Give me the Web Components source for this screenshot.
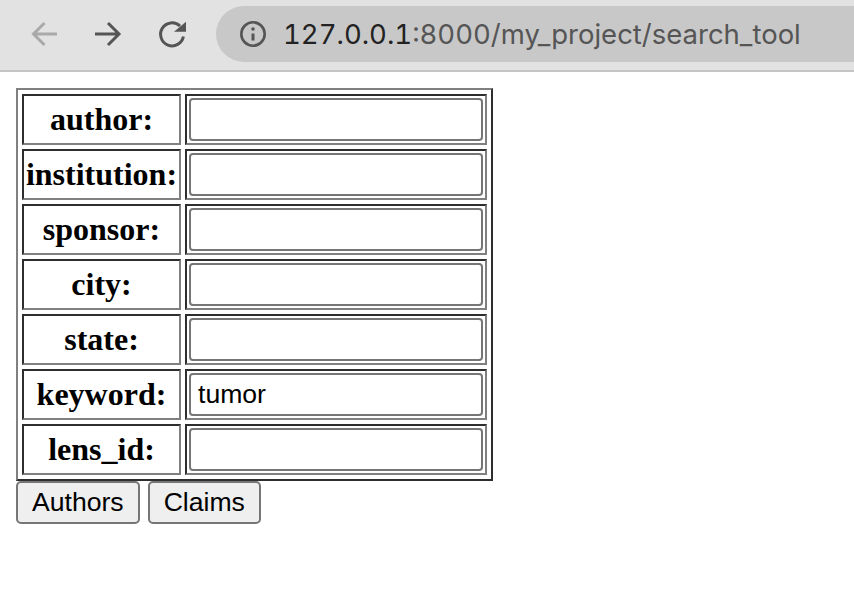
<!doctype html>
<html><head><meta charset="utf-8"><title>search_tool</title>
<style>html,body{margin:0;padding:0;background:#fff;overflow:hidden}</style></head>
<body>
<browser-bar url-host="127.0.0.1" url-rest=":8000/my_project/search_tool"></browser-bar>
<search-form>
  <search-row label="author:"></search-row>
  <search-row label="institution:"></search-row>
  <search-row label="sponsor:"></search-row>
  <search-row label="city:"></search-row>
  <search-row label="state:"></search-row>
  <search-row label="keyword:" value="tumor"></search-row>
  <search-row label="lens_id:"></search-row>
  <form-button slot="actions">Authors</form-button>
  <form-button slot="actions">Claims</form-button>
</search-form>
<script>
class BrowserBar extends HTMLElement{
  connectedCallback(){
    const s=this.attachShadow({mode:'open'});
    s.innerHTML=`<style>
      :host{display:flex;align-items:center;box-sizing:border-box;height:72px;background:#e2e2e2;border-bottom:2px solid #c4c4c4;padding:0 0 2px 28px;overflow:hidden}
      svg{flex:none;display:block}
      .nav{display:flex;gap:32px;align-items:center}
      .omni{flex:1;margin-left:28px;margin-right:-40px;height:56px;background:#c8c8c8;border-radius:28px;display:flex;align-items:center;padding-left:23px;font:27.5px "Inter","Liberation Sans",sans-serif;font-variant-numeric:tabular-nums;color:#555;white-space:nowrap}
      .host{color:#222}
      .text{margin-left:16px;line-height:56px}
    </style>
    <div class="nav">
      <svg width="32" height="32" viewBox="0 0 32 32" fill="none" stroke="#a9a9a9" stroke-width="3"><path d="M29 16H5.5M16.5 5L5.5 16l11 11"/></svg>
      <svg width="32" height="32" viewBox="0 0 32 32" fill="none" stroke="#555" stroke-width="3"><path d="M3 16h24M16 5l11 11-11 11"/></svg>
      <svg width="32" height="32" viewBox="0 0 32 32" fill="none" stroke="#555"><path stroke-width="3" d="M27.4 18.5A11.5 11.5 0 1 1 24 8"/><path fill="#555" stroke="none" d="M30 3.7v10H18z"/></svg>
    </div>
    <div class="omni">
      <svg width="28" height="28" viewBox="0 0 28 28" fill="none" stroke="#555" stroke-width="2.6"><circle cx="14" cy="14" r="11.7"/><path stroke-width="3" d="M14 13.5v7"/><circle cx="14" cy="9" r="1.8" fill="#555" stroke="none"/></svg>
      <span class="text"><span class="host">${this.getAttribute('url-host')}</span>${this.getAttribute('url-rest')}</span>
    </div>`;
  }
}
class SearchForm extends HTMLElement{
  connectedCallback(){
    const s=this.attachShadow({mode:'open'});
    s.innerHTML=`<style>
      :host{display:block;padding:16px 16px 0}
      .table{display:grid;grid-template-columns:159px 302px;grid-auto-rows:51px;gap:4px;padding:4px;box-sizing:border-box;width:477px;border:2px solid;border-color:#808080 #2e2e2e #2e2e2e #808080}
      .actions{display:flex;gap:8px}
    </style>
    <div class="table"><slot></slot></div>
    <div class="actions"><slot name="actions"></slot></div>`;
  }
}
class SearchRow extends HTMLElement{
  connectedCallback(){
    const s=this.attachShadow({mode:'open'});
    const v=this.getAttribute('value')||'';
    s.innerHTML=`<style>
      :host{display:contents}
      .cell{box-sizing:border-box;border:2px solid;border-color:#2e2e2e #808080 #808080 #2e2e2e}
      .label{display:flex;align-items:center;justify-content:center;font:bold 32px "Liberation Serif",serif;color:#000;white-space:nowrap}
      .field{padding:2px;display:flex}
      input{flex:1;min-width:0;box-sizing:border-box;margin:0;height:43px;border:2px solid #767676;border-radius:4px;padding:0 7px;background:#fff;font:26.6px "Liberation Sans",sans-serif;color:#000;outline:none}
    </style>
    <div class="cell label">${this.getAttribute('label')}</div>
    <div class="cell field"><input type="text" value="${v}"></div>`;
  }
}
class FormButton extends HTMLElement{
  connectedCallback(){
    const s=this.attachShadow({mode:'open'});
    s.innerHTML=`<style>
      :host{display:block}
      button{display:block;box-sizing:border-box;height:43px;margin:0;padding:0 14px;border:2px solid #767676;border-radius:5px;background:#efefef;font:26.6px "Liberation Sans",sans-serif;color:#000}
    </style><button type="button"><slot></slot></button>`;
  }
}
customElements.define('browser-bar',BrowserBar);
customElements.define('search-form',SearchForm);
customElements.define('search-row',SearchRow);
customElements.define('form-button',FormButton);
</script>
</body></html>
